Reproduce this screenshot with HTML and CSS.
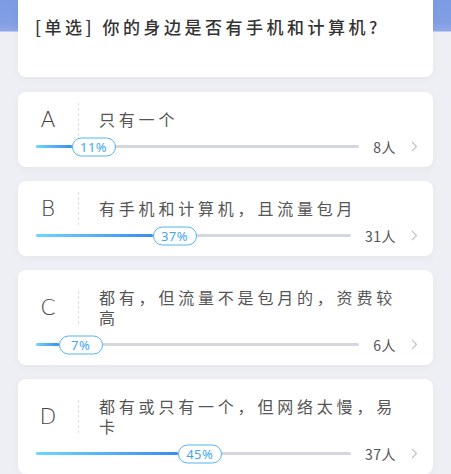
FILE: index.html
```html
<!DOCTYPE html>
<html lang="zh-CN">
<head>
<meta charset="utf-8">
<title>投票结果</title>
<link rel="stylesheet" href="styles.css">
</head>
<body>
<div class="page">
  <div class="card question">
    <p class="q-title">[单选] 你的身边是否有手机和计算机?</p>
  </div>

  <div class="card option">
    <div class="opt-head">
      <div class="opt-letter">A</div>
      <div class="opt-text">只有一个</div>
    </div>
    <div class="opt-stats">
      <div class="track"><div class="fill" style="width:11%"><span class="pill">11%</span></div></div>
      <span class="count">8人</span>
      <svg class="chev" width="7" height="11" viewBox="0 0 7 11"><path d="M1 1l4.5 4.5L1 10" fill="none" stroke="#c2c2c6" stroke-width="1.1"/></svg>
    </div>
  </div>

  <div class="card option">
    <div class="opt-head">
      <div class="opt-letter">B</div>
      <div class="opt-text">有手机和计算机，且流量包月</div>
    </div>
    <div class="opt-stats">
      <div class="track"><div class="fill" style="width:37%"><span class="pill">37%</span></div></div>
      <span class="count">31人</span>
      <svg class="chev" width="7" height="11" viewBox="0 0 7 11"><path d="M1 1l4.5 4.5L1 10" fill="none" stroke="#c2c2c6" stroke-width="1.1"/></svg>
    </div>
  </div>

  <div class="card option">
    <div class="opt-head">
      <div class="opt-letter">C</div>
      <div class="opt-text">都有，但流量不是包月的，资费较高</div>
    </div>
    <div class="opt-stats">
      <div class="track"><div class="fill" style="width:7%"><span class="pill">7%</span></div></div>
      <span class="count">6人</span>
      <svg class="chev" width="7" height="11" viewBox="0 0 7 11"><path d="M1 1l4.5 4.5L1 10" fill="none" stroke="#c2c2c6" stroke-width="1.1"/></svg>
    </div>
  </div>

  <div class="card option">
    <div class="opt-head">
      <div class="opt-letter">D</div>
      <div class="opt-text">都有或只有一个，但网络太慢，易卡</div>
    </div>
    <div class="opt-stats">
      <div class="track"><div class="fill" style="width:45%"><span class="pill">45%</span></div></div>
      <span class="count">37人</span>
      <svg class="chev" width="7" height="11" viewBox="0 0 7 11"><path d="M1 1l4.5 4.5L1 10" fill="none" stroke="#c2c2c6" stroke-width="1.1"/></svg>
    </div>
  </div>
</div>
</body>
</html>
```
FILE: styles.css
```css
html, body {
  margin: 0;
  padding: 0;
}
body {
  background: linear-gradient(180deg, #7c9be2 0, #809ee3 22px, #92a8e9 31px, #eeeff4 32px, #eeeff4 100%);
  font-family: "Noto Sans CJK SC", "Noto Sans", sans-serif;
  min-height: 474px;
}
.page {
  padding: 0 18px;
}
.card {
  background: #fff;
  border-radius: 8px;
  box-shadow: 0 2px 6px rgba(60, 70, 110, 0.05);
}
.question {
  border-radius: 0 0 8px 8px;
  padding: 15px 16px 38px 17px;
  margin-bottom: 15px;
}
.q-title {
  margin: 0;
  font-size: 17px;
  line-height: 24px;
  font-weight: 500;
  letter-spacing: 3.5px;
  color: #333;
}
.option {
  padding: 17px 15px 11px 0;
  margin-bottom: 14px;
}
.opt-head {
  display: flex;
  align-items: center;
}
.opt-letter {
  flex: 0 0 61px;
  box-sizing: border-box;
  height: 33px;
  margin: -7px 0;
  border-right: 1px dashed #dedede;
  display: flex;
  align-items: center;
  justify-content: center;
  font-family: "DejaVu Sans", Roboto, sans-serif;
  font-weight: 200;
  font-size: 22px;
  color: #444;
}
.opt-text {
  flex: 1;
  padding: 0 9px 0 20px;
  font-size: 16px;
  line-height: 20px;
  letter-spacing: 3.8px;
  color: #555;
}
.opt-stats {
  display: flex;
  align-items: center;
  height: 19px;
  margin: 8px 0 0 18px;
}
.track {
  flex: 1;
  height: 3px;
  border-radius: 2px;
  background: #d5d7de;
}
.fill {
  position: relative;
  height: 100%;
  border-radius: 2px;
  background: linear-gradient(90deg, #6ed7fc, #3a8cf0);
}
.pill {
  position: absolute;
  left: 100%;
  top: 50%;
  transform: translateY(-50%);
  box-sizing: border-box;
  width: 44px;
  height: 19px;
  border: 1px solid #55b2f6;
  border-radius: 10px;
  background: #fff;
  text-align: center;
  font-family: "Noto Sans", "Liberation Sans", sans-serif;
  font-size: 13px;
  letter-spacing: 0.5px;
  line-height: 17px;
  color: #41a6f2;
}
.count {
  margin-left: 14px;
  font-size: 14px;
  letter-spacing: 0.5px;
  color: #555;
}
.chev {
  margin-left: 15px;
  display: block;
}
```
